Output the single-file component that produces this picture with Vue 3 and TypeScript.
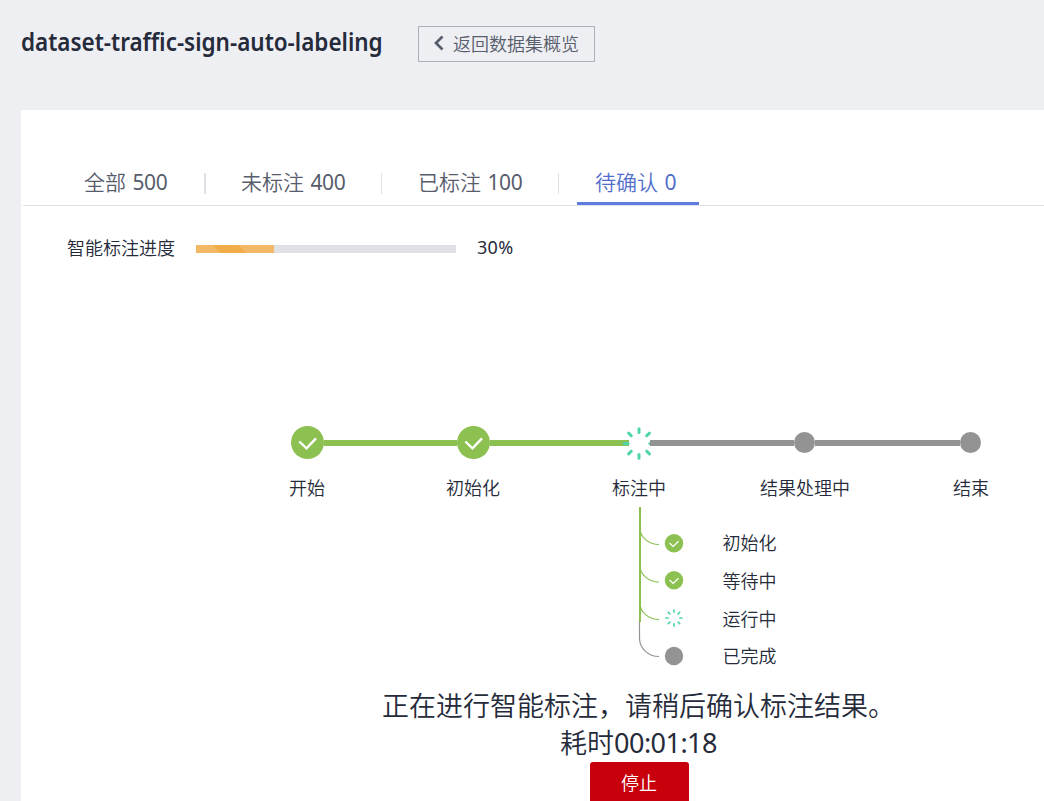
<script setup lang="ts">
type State = 'done' | 'running' | 'pending'

interface Tab {
  label: string
  count: number
}

interface Step {
  label: string
  state: State
}

const tabs: Tab[] = [
  { label: '全部', count: 500 },
  { label: '未标注', count: 400 },
  { label: '已标注', count: 100 },
  { label: '待确认', count: 0 },
]
const activeTab = '待确认'
const progress = 30

const steps: Step[] = [
  { label: '开始', state: 'done' },
  { label: '初始化', state: 'done' },
  { label: '标注中', state: 'running' },
  { label: '结果处理中', state: 'pending' },
  { label: '结束', state: 'pending' },
]

const subSteps: Step[] = [
  { label: '初始化', state: 'done' },
  { label: '等待中', state: 'done' },
  { label: '运行中', state: 'running' },
  { label: '已完成', state: 'pending' },
]

const rays = [0, 45, 90, 135, 180, 225, 270, 315]
</script>

<template>
  <div class="page">
    <header class="header">
      <h1 class="title"><span class="title-text">dataset-traffic-sign-auto-labeling</span></h1>
      <button class="back">
        <svg class="back-icon" width="10" height="16" viewBox="0 0 10 16">
          <path d="M8.500 1.500 2 8l6.500 6.500" />
        </svg>
        <span>返回数据集概览</span>
      </button>
    </header>

    <main class="panel">
      <nav class="tabs">
        <template v-for="(tab, i) in tabs" :key="tab.label">
          <i v-if="i > 0" class="divider" :class="{ thick: i === 1 }"></i>
          <a class="tab" :class="{ active: tab.label === activeTab }">{{ tab.label }} <span class="num">{{ tab.count }}</span></a>
        </template>
      </nav>

      <section class="progress">
        <span class="progress-label">智能标注进度</span>
        <div class="bar"><div class="fill" :style="{ width: progress + '%' }"></div></div>
        <span class="percent num">{{ progress }}%</span>
      </section>

      <section class="steps">
        <div v-for="step in steps" :key="step.label" class="step" :class="step.state">
          <div class="track">
            <i class="line before"></i>
            <svg v-if="step.state === 'done'" class="node" width="33" height="33" viewBox="0 0 33 33">
              <circle class="green" cx="16.500" cy="16.500" r="16.500" />
              <path class="check" d="M8.300 15.500 15.500 22.300 25 12.300" />
            </svg>
            <svg v-else-if="step.state === 'running'" class="node" width="21" height="33" viewBox="0 0 21 33">
              <g v-for="r in rays" :key="r" :transform="`rotate(${r} 10 17.5)`">
                <path class="ray" d="M10 2.800v3.800" />
              </g>
            </svg>
            <svg v-else class="node" width="21" height="21" viewBox="0 0 21 21">
              <circle class="gray" cx="10.500" cy="10.500" r="10.500" />
            </svg>
            <i class="line after"></i>
          </div>
          <div class="step-label">{{ step.label }}</div>
        </div>
      </section>

      <section class="substeps">
        <svg class="branches" width="22" height="152" viewBox="0 0 22 152">
          <path class="branch idle" d="M1.500 112v19a19.500 18.500 0 0 0 19.500 18.500" />
          <path class="branch" d="M2 21a19 16.500 0 0 0 19 16.500" />
          <path class="branch" d="M2 58.500a19 16.500 0 0 0 19 16.500" />
          <path class="branch" d="M2 96a19 16.500 0 0 0 19 16.500" />
          <path class="trunk" d="M2 0v115" />
        </svg>
        <ul class="sublist">
          <li v-for="sub in subSteps" :key="sub.label" class="sub">
            <svg width="19" height="19" viewBox="0 0 19 19">
              <template v-if="sub.state === 'done'">
                <circle class="green" cx="10" cy="9.300" r="9.200" />
                <path class="check small" d="M5.500 9 9.200 12.500 14.500 7.300" />
              </template>
              <template v-else-if="sub.state === 'running'">
                <g v-for="r in rays" :key="r" :transform="`rotate(${r} 10 9)`">
                  <path class="ray small" d="M10 1v2.100" />
                </g>
              </template>
              <circle v-else class="gray" cx="10" cy="9" r="9.200" />
            </svg>
            <span class="sub-label">{{ sub.label }}</span>
          </li>
        </ul>
      </section>

      <section class="status">
        <p>正在进行智能标注，请稍后确认标注结果。</p>
        <p>耗时<span class="num time">00:01:18</span></p>
        <button class="stop">停止</button>
      </section>
    </main>
  </div>
</template>

<style>
body {
  background: #eeeff3;
}
</style>

<style scoped>
.page {
  width: 1044px;
  height: 801px;
  overflow: hidden;
  background: #eeeff3;
  color: #252b3a;
  font-family: "Noto Sans", "Noto Sans CJK SC", sans-serif;
  font-weight: 350;
  display: flex;
  flex-direction: column;
}
button {
  font: inherit;
  margin: 0;
  white-space: nowrap;
}
svg {
  overflow: visible;
}
.num {
  font-weight: 400;
  letter-spacing: -0.020em;
}
.header {
  flex: none;
  height: 110px;
  box-sizing: border-box;
  padding: 26px 0 0 21px;
  display: flex;
  align-items: flex-start;
}
.title {
  margin: 0;
  width: 397px;
  font-size: 25px;
  line-height: 30px;
  font-weight: 600;
  white-space: nowrap;
}
.title-text {
  display: inline-block;
  transform: scaleX(0.899);
  transform-origin: 0 50%;
}
.back {
  box-sizing: border-box;
  width: 177px;
  height: 36px;
  padding: 0 0 0 15px;
  border: 1px solid #adb0b8;
  background: transparent;
  color: #575d6c;
  font-size: 18px;
  line-height: 34px;
  display: flex;
  align-items: center;
  gap: 9px;
}
.back-icon {
  margin-top: -2px;
}
.back-icon path {
  fill: none;
  stroke: #575d6c;
  stroke-width: 2.7;
}
.panel {
  flex: 1;
  margin-left: 21px;
  padding-top: 52px;
  background: #fff;
}
.tabs {
  margin-left: 2px;
  padding-left: 43px;
  height: 43px;
  border-bottom: 1px solid #dfe1e6;
  display: flex;
  align-items: flex-start;
}
.tab {
  box-sizing: border-box;
  width: 141px;
  height: 43px;
  padding-left: 18px;
  line-height: 41px;
  font-size: 21px;
  color: #575d6c;
  white-space: nowrap;
}
.tab .num {
  margin-left: 1px;
}
.tab:first-child {
  width: 120px;
}
.tab.active {
  width: 122px;
  color: #526ecc;
  border-bottom: 3px solid #5e7ce0;
}
.divider {
  width: 1px;
  height: 21px;
  margin: 11px 18px 0 17px;
  background: #dfe1e6;
}
.divider.thick {
  width: 2px;
  margin-left: 18px;
  margin-right: 17px;
}
.progress {
  margin: 24px 0 0 46px;
  height: 36px;
  display: flex;
  align-items: center;
  font-size: 18px;
}
.progress-label {
  width: 129px;
  margin-top: -2px;
}
.bar {
  width: 260px;
  height: 8px;
  margin-top: 2px;
  background: #dfe1e6;
}
/* Wide diagonal stripe that leans down to the right */
.fill {
  height: 100%;
  background: linear-gradient(45deg, #f2b866 0 17px, #f0ad4a 17px 36px, #f2b866 36px);
}
.percent {
  margin: -2px 0 0 21px;
  letter-spacing: 0.300px;
}
.steps {
  margin: 160px 0 0 203px;
  display: grid;
  grid-template-columns: repeat(5, 166px);
}
.track {
  height: 33px;
  display: flex;
  align-items: center;
}
.node {
  flex: none;
}
.pending .track {
  margin: 0 1px 0 0;
}
.pending:last-child .track {
  margin-left: -1px;
}
.line {
  flex: 1;
  height: 6px;
  margin-top: 1px;
  background: #939393;
}
.done .line,
.running .before {
  background: #8cc152;
}
.step:first-child .before,
.step:last-child .after {
  background: transparent;
}
.green {
  fill: #8cc152;
}
.gray {
  fill: #939393;
}
.check {
  fill: none;
  stroke: #fff;
  stroke-width: 2.4;
}
.check.small {
  stroke-width: 1.2;
}
.ray {
  fill: none;
  stroke: #50d4ab;
  stroke-width: 3;
  stroke-linecap: round;
}
.ray.small {
  stroke-width: 1.7;
}
.step-label {
  margin-top: 14px;
  height: 30px;
  line-height: 30px;
  font-size: 18px;
  text-align: center;
}
.substeps {
  margin: 4px 0 0 617px;
  height: 180px;
  display: flex;
}
.branches {
  flex: none;
}
.branch {
  fill: none;
  stroke: #8cc152;
  stroke-width: 1.2;
}
.branch.idle {
  stroke: #939393;
}
.trunk {
  stroke: #8cc152;
  stroke-width: 2;
}
.sublist {
  list-style: none;
  margin: 0;
  padding: 17.300px 0 0 4px;
}
.sub {
  height: 37.700px;
  display: flex;
  align-items: center;
  gap: 39.500px;
  font-size: 18px;
}
.sub-label {
  margin-top: -2px;
}
.status {
  width: 831px;
  margin-left: 202px;
  display: flex;
  flex-direction: column;
  align-items: center;
  font-size: 27px;
}
.status p {
  margin: 0;
  height: 37.500px;
  line-height: 37.500px;
  white-space: nowrap;
}
.status p + p {
  line-height: 36px;
}
.stop {
  width: 99px;
  height: 42px;
  margin-left: 2px;
  padding: 0 1px 0 0;
  border: 0;
  border-radius: 3px;
  background: #c7000b;
  color: #fff;
  font-size: 18px;
  line-height: 42px;
}
</style>
